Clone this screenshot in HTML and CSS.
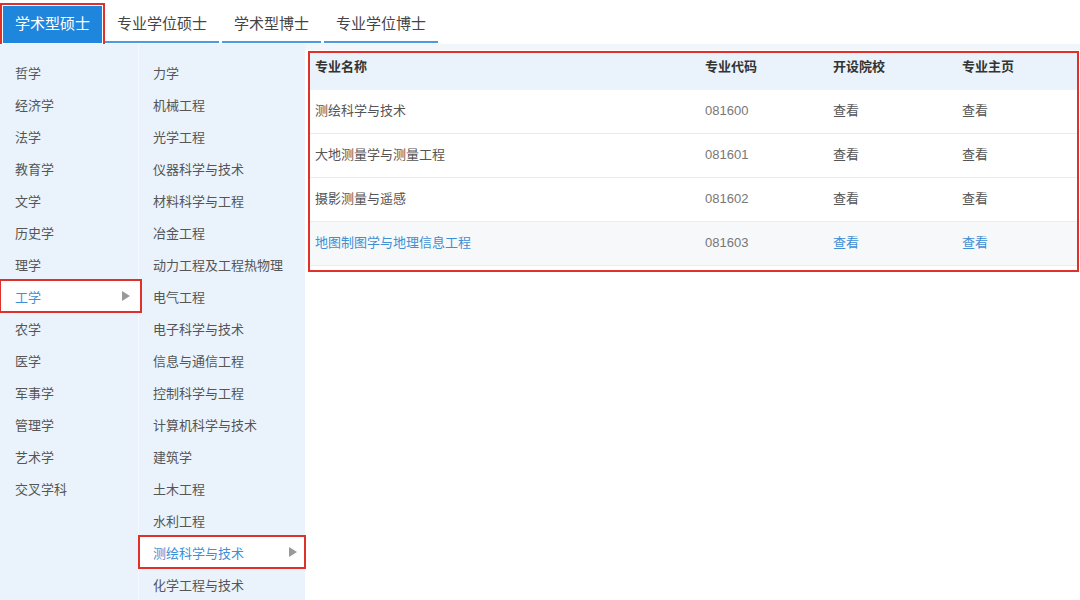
FILE: index.html
```html
<!DOCTYPE html>
<html lang="zh-CN">
<head>
    <meta charset="UTF-8" />
    <title>专业目录</title>
    <link rel="stylesheet" href="styles.css">
</head>
<body>
    <div class="tabs">
        <a class="tab active">学术型硕士</a>
        <a class="tab">专业学位硕士</a>
        <a class="tab">学术型博士</a>
        <a class="tab">专业学位博士</a>
    </div>

    <div class="main">
        <!-- 学科门类 -->
        <ul class="menu menu-cat">
            <li>哲学</li>
            <li>经济学</li>
            <li>法学</li>
            <li>教育学</li>
            <li>文学</li>
            <li>历史学</li>
            <li>理学</li>
            <li class="selected">工学<span class="arrow"></span></li>
            <li>农学</li>
            <li>医学</li>
            <li>军事学</li>
            <li>管理学</li>
            <li>艺术学</li>
            <li>交叉学科</li>
        </ul>

        <!-- 一级学科 -->
        <ul class="menu menu-sub">
            <li>力学</li>
            <li>机械工程</li>
            <li>光学工程</li>
            <li>仪器科学与技术</li>
            <li>材料科学与工程</li>
            <li>冶金工程</li>
            <li>动力工程及工程热物理</li>
            <li>电气工程</li>
            <li>电子科学与技术</li>
            <li>信息与通信工程</li>
            <li>控制科学与工程</li>
            <li>计算机科学与技术</li>
            <li>建筑学</li>
            <li>土木工程</li>
            <li>水利工程</li>
            <li class="selected">测绘科学与技术<span class="arrow"></span></li>
            <li>化学工程与技术</li>
        </ul>

        <div class="result">
            <div class="result-table">
                <div class="row head">
                    <span>专业名称</span>
                    <span>专业代码</span>
                    <span>开设院校</span>
                    <span>专业主页</span>
                </div>
                <div class="row">
                    <span>测绘科学与技术</span>
                    <span class="code">081600</span>
                    <span>查看</span>
                    <span>查看</span>
                </div>
                <div class="row">
                    <span>大地测量学与测量工程</span>
                    <span class="code">081601</span>
                    <span>查看</span>
                    <span>查看</span>
                </div>
                <div class="row">
                    <span>摄影测量与遥感</span>
                    <span class="code">081602</span>
                    <span>查看</span>
                    <span>查看</span>
                </div>
                <div class="row hover">
                    <span>地图制图学与地理信息工程</span>
                    <span class="code">081603</span>
                    <span>查看</span>
                    <span>查看</span>
                </div>
            </div>
        </div>
    </div>
</body>
</html>
```

FILE: styles.css
```css
:root {
    --blue: #1f86dd;
    --link: #3e8fd4;
    --panel: #eaf3fb;
    --mark: #e0302a;
    --text: #555;
}

body {
    margin: 0;
    font-family: "Liberation Sans", "Noto Sans CJK SC", sans-serif;
    font-size: 13px;
    color: var(--text);
    background: #fff;
}

/* Tabs oben */
.tabs {
    display: flex;
    gap: 3px;
    padding: 6px 0 0 3px;
    height: 38px;
}

.tab {
    padding: 0 12px;
    height: 35px;
    line-height: 36px;
    font-size: 15px;
    color: #444;
    border-bottom: 2px solid #4c9be0;
    cursor: pointer;
}

.tab.active {
    background: var(--blue);
    color: #fff;
    border-bottom-color: var(--blue);
    outline: 2px solid var(--mark);
    outline-offset: 1px;
}

.main {
    display: flex;
    min-height: calc(100vh - 44px);
}

/* Menüspalten */
.menu {
    list-style: none;
    margin: 0;
    padding: 12px 0 0 0;
    background: var(--panel);
}

.menu-cat {
    width: 138px;
    border-right: 1px solid #f4f8fc;
}

.menu-sub {
    width: 166px;
}

.menu li {
    display: flex;
    align-items: center;
    justify-content: space-between;
    height: 32px;
    padding: 0 8px 0 15px;
    cursor: pointer;
}

.menu-sub li {
    padding-left: 14px;
}

.menu li.selected {
    position: relative;
    z-index: 1;
    background: #fff;
    color: var(--link);
    outline: 2px solid var(--mark);
    outline-offset: -1px;
}

.menu-cat li.selected {
    margin-right: -3px;
    padding-right: 11px;
}

.arrow {
    width: 0;
    height: 0;
    border-left: 8px solid #999;
    border-top: 5px solid transparent;
    border-bottom: 5px solid transparent;
}

/* Ergebnis-Tabelle */
.result {
    flex: 1;
    border-top: 6px solid #f1f6fb;
    padding: 1px 1px 0 3px;
}

.result-table {
    border: 2px solid var(--mark);
    padding-bottom: 4px;
}

.row {
    display: grid;
    grid-template-columns: 390px 128px 129px 1fr;
    padding: 12px 0 0 5px;
    height: 31px;
    line-height: 18px;
    border-bottom: 1px solid #ececec;
}

.row.head {
    background: var(--panel);
    padding-top: 5px;
    height: 31px;
    border-bottom: 1px solid #f0f4f8;
    color: #333;
    font-weight: bold;
}

.row .code {
    color: #777;
}

.row.hover {
    background: #f6f8fa;
    color: var(--link);
}

.row.hover .code {
    color: #777;
}
```
